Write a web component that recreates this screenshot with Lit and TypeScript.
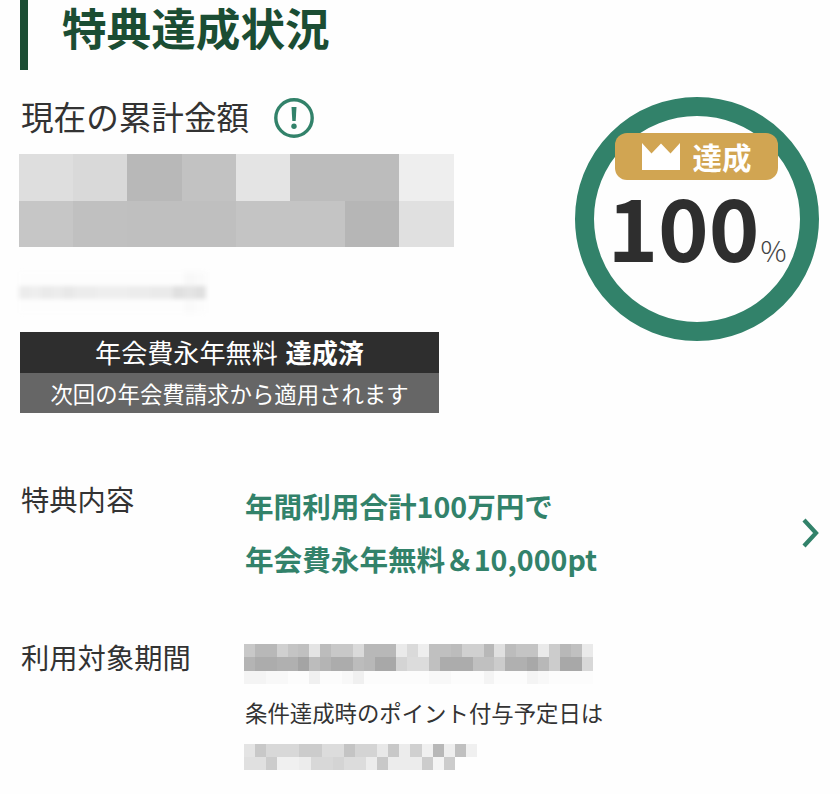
import { LitElement, html, css } from "lit";
import { customElement, property } from "lit/decorators.js";

@customElement("gray-mosaic")
class GrayMosaic extends LitElement {
  @property({ type: Array }) rows: string[] = [];
  @property({ type: Number }) cell = 11;
  @property({ type: Number }) rowh = 13;
  static styles = css`
    :host { display: block; }
    .row { display: flex; }
    .c { flex: none; }
  `;
  render() {
    return this.rows.map(
      (r) => html`<div class="row" style="height:${this.rowh}px">
        ${r.trim().split(/\s+/).map((v) => html`<div class="c" style="width:${this.cell}px;background:#${v}${v}${v}"></div>`)}
      </div>`
    );
  }
}

@customElement("app-root")
class AppRoot extends LitElement {
  static styles = css`
    :host {
      display: block;
      width: 840px;
      height: 794px;
      overflow: hidden;
      background: #fefefe;
      color: #333;
      font-family: "Noto Sans CJK JP", "Noto Sans", sans-serif;
      box-sizing: border-box;
      padding-left: 20px;
    }
    .title {
      height: 70px;
      box-sizing: border-box;
      border-left: 8px solid #1b4d33;
      padding-left: 34px;
      font-size: 44.6px;
      line-height: 53px;
      font-weight: 700;
      color: #1b4d33;
    }
    .top { display: flex; justify-content: space-between; padding-right: 21px; }
    .left { width: 436px; }
    .head {
      display: flex;
      align-items: center;
      gap: 25px;
      height: 40px;
      margin-top: 26px;
      padding-left: 1px;
      font-size: 32.6px;
      line-height: 40px;
    }
    .head svg { display: block; flex: none; margin-top: 3px; }
    .m1 { margin: 18px 0 0 -1.5px; filter: blur(0.4px); }
    .m2 { margin: 25px 0 0 -1px; filter: blur(2.2px); }
    .notice { width: 419px; margin-top: 19px; color: #fff; text-align: center; }
    .n1 { height: 41px; line-height: 41px; background: #2e2e2e; font-size: 26.1px; }
    .n1 b { font-weight: 700; margin-left: 2px; }
    .n2 { height: 40px; line-height: 40px; background: #666; font-size: 22.4px; }
    .ring {
      width: 244px;
      height: 244px;
      margin-top: 27px;
      box-sizing: border-box;
      border: 19px solid #32826a;
      border-radius: 50%;
      display: flex;
      flex-direction: column;
      align-items: center;
      padding-top: 17px;
    }
    .badge {
      flex: none;
      width: 163px;
      height: 47px;
      margin-right: 2px;
      border-radius: 12px;
      background: #d1a552;
      color: #fff;
      display: flex;
      align-items: center;
      gap: 13px;
      padding-left: 27px;
      box-sizing: border-box;
      font-size: 29.5px;
      font-weight: 700;
      line-height: 47px;
    }
    .badge svg { display: block; flex: none; }
    .pct {
      display: flex;
      align-items: baseline;
      margin-top: 10px;
      margin-left: 0;
      color: #2e2e2e;
      font-size: 86px;
      line-height: 70px;
      font-weight: 700;
      white-space: nowrap;
    }
    .pct small { font-size: 29px; font-weight: 300; margin-left: 1px; color: #444; }
    .info {
      display: grid;
      grid-template-columns: 225px 1fr;
      padding-right: 21px;
    }
    .label { padding-left: 1px; font-size: 28.3px; line-height: 40px; }
    .benefit {
      display: flex;
      justify-content: space-between;
      align-items: center;
      color: #32826a;
      font-size: 28.6px;
      font-weight: 700;
      line-height: 53px;
    }
    .benefit svg { display: block; flex: none; margin-top: 2px; }
    .l1 { margin-top: 66px; }
    .v1 { margin-top: 66px; }
    .l2 { margin-top: 52px; }
    .v2 { margin-top: 59px; }
    .m3 { margin-left: -1px; filter: blur(0.7px); }
    .note { font-size: 22.4px; line-height: 32px; margin: 12px 0 16px 0; }
    .m4 { margin-left: -1px; filter: blur(0.7px); }
  `;

  render() {
    return html`
      <div class="title">特典達成状況</div>
      <div class="top">
        <div class="left">
          <div class="head">
            <span>現在の累計金額</span>
            <svg width="40" height="40" viewBox="0 0 40 40">
              <circle cx="20" cy="20" r="18.2" fill="none" stroke="#32826a" stroke-width="3.4"></circle>
              <path d="M17.5 9h5l-.8 14h-3.4z" fill="#32826a"></path>
              <circle cx="20" cy="28.2" r="2.7" fill="#32826a"></circle>
            </svg>
          </div>
          <gray-mosaic class="m1" .cell=${54.4} .rowh=${46.5} .rows=${[
            "de d9 b8 c2 e4 bc bc ee",
            "c6 c0 bf bf c4 c4 b6 e0",
          ]}></gray-mosaic>
          <gray-mosaic class="m2" .cell=${11} .rowh=${13.5} .rows=${[
            "fd fd fd fd fd fd fd fd fd fd fd fd fd fd fd f8 fa",
            "ec ee ea ec e8 ec ec ee ee ee ec ec ea ea e0 e4 e0",
            "fd fd fd fd fd fd fd fd fd fd fd fd fd fd fd fa fc",
          ]}></gray-mosaic>
          <div class="notice">
            <div class="n1">年会費永年無料 <b>達成済</b></div>
            <div class="n2">次回の年会費請求から適用されます</div>
          </div>
        </div>
        <div class="ring">
          <div class="badge">
            <svg width="38" height="27" viewBox="0 0 38 27"><path d="M0 0L9.5 10.5L19 0.5L28.5 10.5L38 0V27H0Z" fill="#fff"></path></svg>
            <span>達成</span>
          </div>
          <div class="pct">100<small>%</small></div>
        </div>
      </div>
      <div class="info">
        <div class="label l1">特典内容</div>
        <div class="benefit v1">
          <div>年間利用合計100万円で<br />年会費永年無料＆10,000pt</div>
          <svg width="17" height="30" viewBox="0 0 17 30"><path d="M2 2L14 15L2 28" fill="none" stroke="#32826a" stroke-width="4.2"></path></svg>
        </div>
        <div class="label l2">利用対象期間</div>
        <div class="v2">
          <gray-mosaic class="m3" .cell=${10.9} .rowh=${13.5} .rows=${[
            "c8 b8 b8 d0 c4 c0 e4 bc c8 c8 da b8 b8 b8 ea da ee c0 c0 bc d0 d0 b8 e0 bc c4 c4 ea cc b8 c0 ea",
            "b4 ac ac b0 b0 a4 bc b4 ac ac bc b8 a8 a8 d4 dc dc c0 ac ac ac c0 c0 cc b0 b0 a8 b8 cc a8 a8 d8",
            "f4 f4 f8 f8 fc fc f0 fc fc f8 f0 fc fc fc fc fc fc f8 f8 fc fc fc f4 fc fc fc f4 f8 fc fc fc fc",
          ]}></gray-mosaic>
          <div class="note">条件達成時のポイント付与予定日は</div>
          <gray-mosaic class="m4" .cell=${11.1} .rowh=${13} .rows=${[
            "e4 c8 d8 d8 d8 cc cc dc dc c4 d4 d4 e8 c8 ec d0 f0 b8 ee c0 f0",
            "e0 e0 cc f0 f0 ec d8 d8 d4 dc dc ec c8 ec ec ec cc f4 cc fe fe",
          ]}></gray-mosaic>
        </div>
      </div>
    `;
  }
}
